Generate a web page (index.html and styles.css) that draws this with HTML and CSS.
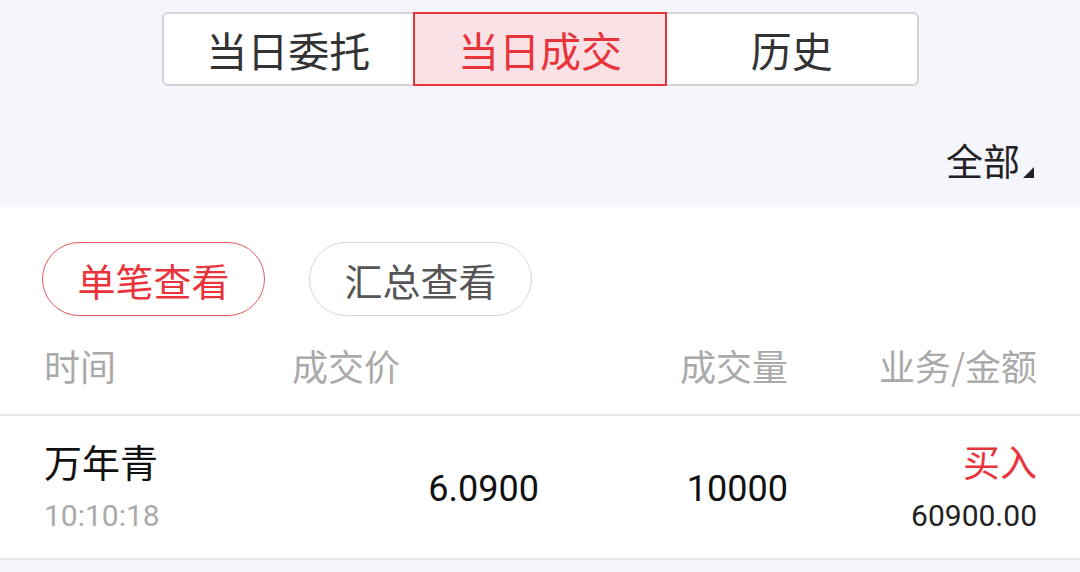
FILE: index.html
```html
<!DOCTYPE html>
<html lang="zh-CN">
<head>
  <meta charset="UTF-8">
  <meta name="viewport" content="width=device-width, initial-scale=1.0">
  <title>当日成交</title>
  <link rel="stylesheet" href="styles.css">
</head>
<body>
<div class="top">
  <div class="tabs">
    <div class="tab">当日委托</div>
    <div class="tab active">当日成交</div>
    <div class="tab">历史</div>
  </div>
  <div class="filter">
    <span>全部</span>
    <svg class="corner" width="11" height="11" viewBox="0 0 11 11"><polygon points="11,0 11,11 0,11" fill="#222"/></svg>
  </div>
</div>

<div class="panel">
  <div class="pills">
    <div class="pill on">单笔查看</div>
    <div class="pill">汇总查看</div>
  </div>

  <div class="grid head">
    <div>时间</div>
    <div class="left">成交价</div>
    <div class="right">成交量</div>
    <div class="right">业务/金额</div>
  </div>

  <div class="grid row">
    <div class="cell">
      <div class="name">万年青</div>
      <div class="sub">10:10:18</div>
    </div>
    <div class="right num">6.0900</div>
    <div class="right num">10000</div>
    <div class="right cell">
      <div class="buy">买入</div>
      <div class="sub dark">60900.00</div>
    </div>
  </div>
</div>
</body>
</html>
```

FILE: styles.css
```css
body { margin: 0; background: #f5f5fc; font-family: "Noto Sans CJK SC", "Noto Sans", sans-serif; color: #333; }

.top { height: 207px; background: #f5f5fc; }
.tabs { display: flex; width: 757px; height: 74px; margin: 0 auto; position: relative; top: 12px; box-sizing: border-box; border: 2px solid #d4d4d8; border-radius: 6px; background: #fff; }
.tab { flex: 1; display: flex; align-items: center; justify-content: center; font-size: 41px; color: #333; }
.tab.active { margin: -2px 0; border: 2px solid #e8343a; background: #f9e1e6; color: #e8343a; }

.filter { display: flex; justify-content: flex-end; align-items: flex-end; padding: 50px 46px 0 0; margin-top: 12px; }
.filter span { font-size: 37px; line-height: 48px; color: #222; }
.corner { margin: 0 0 6px 3px; }

.panel { background: #fff; }
.pills { display: flex; gap: 44px; padding: 35px 0 0 42px; }
.pill { width: 223px; height: 74px; box-sizing: border-box; border: 1.5px solid #d8d8d8; border-radius: 37px; display: flex; align-items: center; justify-content: center; font-size: 38px; color: #555; }
.pill.on { border-color: #e55a5e; color: #e8343a; }

.grid { display: grid; grid-template-columns: 248px 247px 249px 249px; padding: 0 43px 0 44px; }
.left { text-align: left; }
.right { text-align: right; }

.head { height: 100px; align-items: center; font-size: 36px; color: #aaa; border-bottom: 2px solid #e6e6ec; box-sizing: border-box; }

.row { height: 144px; align-items: start; border-bottom: 2px solid #e6e6ec; box-sizing: border-box; }
.cell { margin-top: 22px; }
.name { font-size: 38px; line-height: 46px; color: #111; }
.buy { font-size: 37px; line-height: 46px; color: #e8343a; }
.sub { font-family: Roboto, sans-serif; font-size: 30px; line-height: 40px; margin-top: 12px; color: #aaa; }
.sub.dark { color: #222; }
.num { font-family: Roboto, sans-serif; font-size: 36px; line-height: 42px; color: #111; margin-top: 52px; }
```
